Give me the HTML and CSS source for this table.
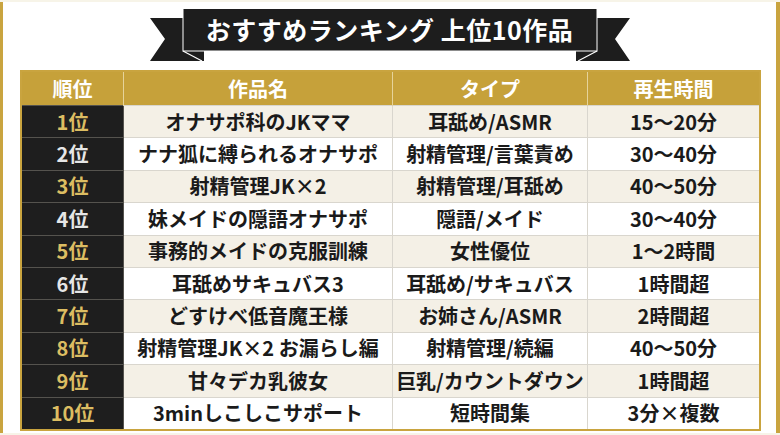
FILE: index.html
```html
<!DOCTYPE html>
<html lang="ja">
<head>
<meta charset="utf-8">
<link rel="stylesheet" href="styles.css">
</head>
<body>
<div class="page">
  <div class="banner">
    <div class="ribbon">
      <svg class="ribbon-bg" width="480" height="54" viewBox="0 0 480 54">
        <polygon points="0,10 54,10 54,53 0,53 15,31" fill="#1d1d1d"/>
        <polygon points="480,10 426,10 426,53 480,53 465,31" fill="#1d1d1d"/>
        <line x1="33" y1="43" x2="52" y2="53" stroke="#fff" stroke-width="1.2"/>
        <line x1="447" y1="43" x2="428" y2="53" stroke="#fff" stroke-width="1.2"/>
        <rect x="33" y="0.5" width="414" height="42.5" fill="#1d1d1d" stroke="#fff" stroke-width="1"/>
      </svg>
      <div class="title">おすすめランキング 上位10作品</div>
    </div>
  </div>
  <table class="rank">
    <thead>
      <tr><th class="c1">順位</th><th class="c2">作品名</th><th class="c3">タイプ</th><th class="c4">再生時間</th></tr>
    </thead>
    <tbody>
      <tr class="alt"><td class="rk gold">1位</td><td>オナサポ科のJKママ</td><td>耳舐め/ASMR</td><td>15〜20分</td></tr>
      <tr><td class="rk">2位</td><td>ナナ狐に縛られるオナサポ</td><td>射精管理/言葉責め</td><td>30〜40分</td></tr>
      <tr class="alt"><td class="rk gold">3位</td><td>射精管理JK×2</td><td>射精管理/耳舐め</td><td>40〜50分</td></tr>
      <tr><td class="rk">4位</td><td>妹メイドの隠語オナサポ</td><td>隠語/メイド</td><td>30〜40分</td></tr>
      <tr class="alt"><td class="rk gold">5位</td><td>事務的メイドの克服訓練</td><td>女性優位</td><td>1〜2時間</td></tr>
      <tr><td class="rk">6位</td><td>耳舐めサキュバス3</td><td>耳舐め/サキュバス</td><td>1時間超</td></tr>
      <tr class="alt"><td class="rk gold">7位</td><td>どすけべ低音魔王様</td><td>お姉さん/ASMR</td><td>2時間超</td></tr>
      <tr><td class="rk gold">8位</td><td>射精管理JK×2 お漏らし編</td><td>射精管理/続編</td><td>40〜50分</td></tr>
      <tr class="alt"><td class="rk gold">9位</td><td>甘々デカ乳彼女</td><td>巨乳/カウントダウン</td><td>1時間超</td></tr>
      <tr><td class="rk gold">10位</td><td>3minしこしこサポート</td><td>短時間集</td><td>3分×複数</td></tr>
    </tbody>
  </table>
</div>
</body>
</html>
```
FILE: styles.css
```css
html, body {
  margin: 0;
  padding: 0;
}
body {
  width: 780px;
  height: 435px;
  overflow: hidden;
  background: #f7f4e8;
  font-family: "Noto Sans CJK JP", "Noto Sans", sans-serif;
  font-weight: 700;
}
.page {
  box-sizing: border-box;
  width: 780px;
  height: 431px;
  margin-top: 2px;
  background: #ffffff;
  border-left: 3px solid #c9a43f;
  border-right: 4px solid #c9a43f;
  padding: 6px 17px 0 17px;
}
.banner {
  display: flex;
  justify-content: center;
  height: 62px;
}
.ribbon {
  position: relative;
  width: 480px;
  height: 54px;
  display: flex;
  justify-content: center;
}
.ribbon-bg {
  position: absolute;
  left: 0;
  top: 0;
}
.title {
  position: relative;
  height: 43px;
  line-height: 42px;
  color: #ffffff;
  font-size: 25px;
  letter-spacing: 0.5px;
  white-space: nowrap;
}
.rank {
  border-collapse: collapse;
  width: 741px;
  table-layout: fixed;
  border: 2px solid #c9a43f;
}
.rank th {
  background: #c6a13a;
  color: #ffffff;
  font-size: 20px;
  height: 33px;
  padding: 0;
  border-left: 1px solid #e6d39a;
  line-height: 1;
}
.rank th:first-child { border-left: none; }
.c1 { width: 101px; }
.c2 { width: 268px; }
.c3 { width: 194px; }
.c4 { width: auto; }
.rank td {
  height: 31.4px;
  padding: 0;
  text-align: center;
  font-size: 20px;
  color: #1a1a1a;
  border: 1px solid #d9d6ce;
  line-height: 1;
  white-space: nowrap;
  background: #ffffff;
}
.rank tr.alt td { background: #f4f0e6; }
.rank td.rk {
  background: #1e1e1e;
  color: #e6e6e6;
  border-color: #55534e;
  font-size: 20px;
}
.rank tr.alt td.rk { background: #1e1e1e; }
.rank td.rk.gold { color: #dcbd62; }
```
